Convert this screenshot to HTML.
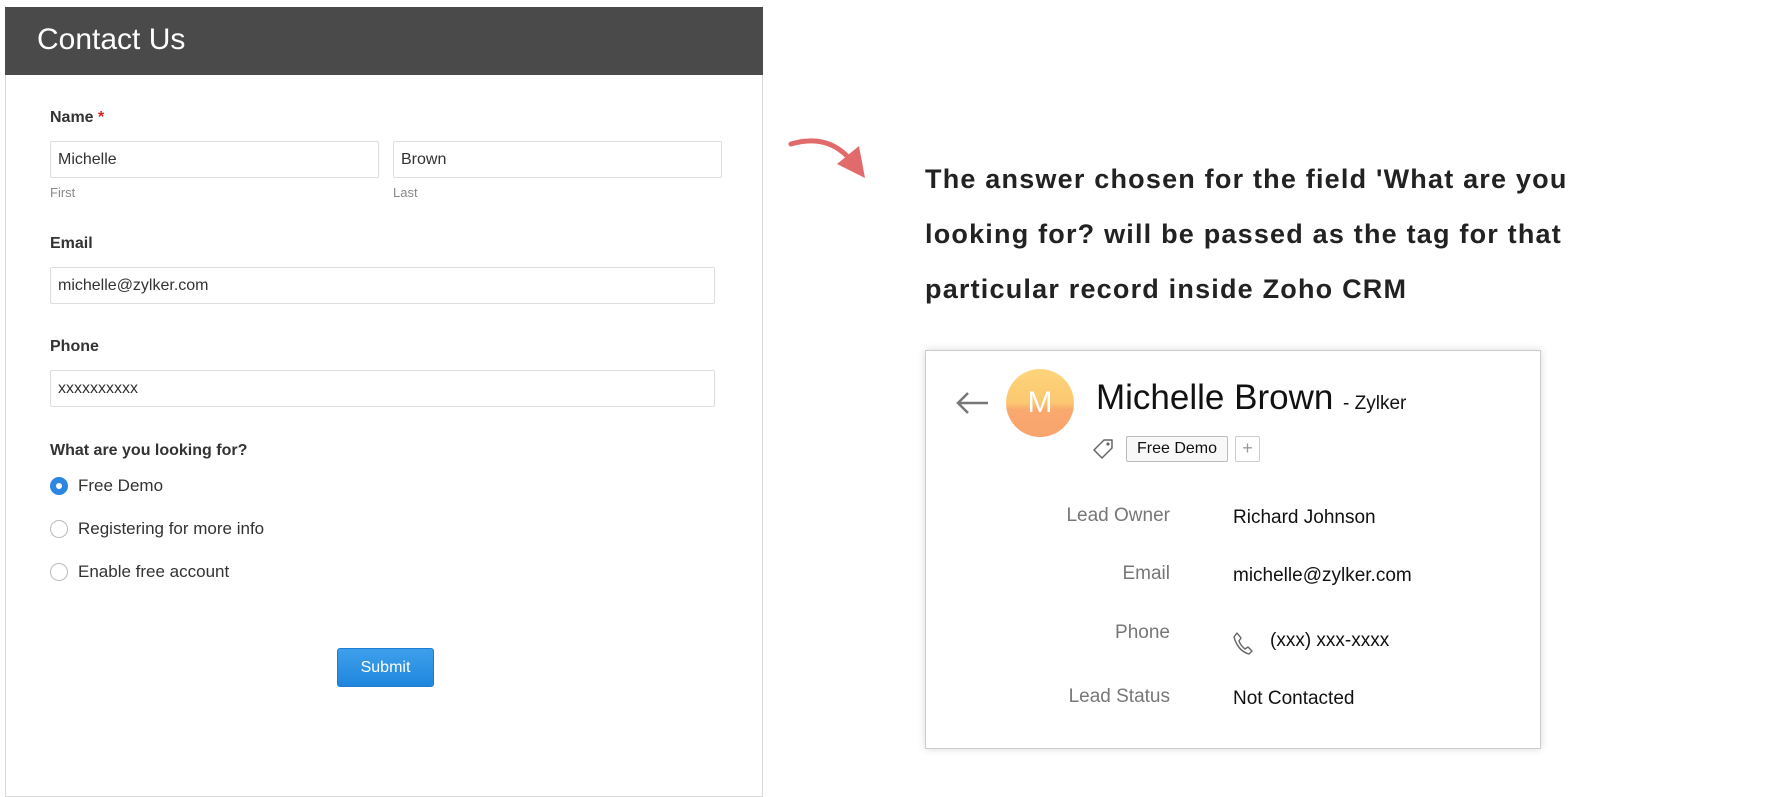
<!DOCTYPE html>
<html><head><meta charset="utf-8"><style>
*{box-sizing:border-box;margin:0;padding:0}
body{width:1770px;height:796px;background:#fff;position:relative;overflow:hidden;font-family:"Liberation Sans",sans-serif}
.a{position:absolute}
.card{left:5px;top:7px;width:758px;height:790px;border:1px solid #d8d8d8;background:#fff}
.hdr{left:5px;top:7px;width:758px;height:68px;background:#4a4a4a}
.hdr span{position:absolute;left:32px;top:16px;color:#fff;font-size:30px}
.lbl{font-size:16px;font-weight:bold;color:#333}
.inp{border:1px solid #ddd;border-radius:2px;height:37px;font-size:16px;color:#333;padding:9px 7px}
.sub{font-size:13px;color:#888}
.radio{width:18px;height:18px;border:1px solid #bbb;border-radius:50%}
.rt{font-size:17px;color:#333}
.big{font-size:27px;font-weight:bold;color:#222;left:925px;letter-spacing:1.2px}
.crm{left:925px;top:350px;width:616px;height:399px;border:1px solid #ccc;box-shadow:0 0 8px rgba(0,0,0,.15);background:#fff}
.fl{font-size:19px;color:#777;text-align:right;width:300px;left:870px}
.fv{font-size:19px;color:#111;left:1233px}
</style></head><body>
<div class="a card"></div>
<div class="a hdr"><span>Contact Us</span></div>
<div class="a lbl" style="left:50px;top:109px">Name <span style="color:#e02020">*</span></div>
<div class="a inp" style="left:50px;top:141px;width:329px">Michelle</div>
<div class="a inp" style="left:393px;top:141px;width:329px">Brown</div>
<div class="a sub" style="left:50px;top:185px">First</div>
<div class="a sub" style="left:393px;top:185px">Last</div>
<div class="a lbl" style="left:50px;top:235px">Email</div>
<div class="a inp" style="left:50px;top:267px;width:665px">michelle@zylker.com</div>
<div class="a lbl" style="left:50px;top:338px">Phone</div>
<div class="a inp" style="left:50px;top:370px;width:665px">xxxxxxxxxx</div>
<div class="a lbl" style="left:50px;top:442px">What are you looking for?</div>
<div class="a radio" style="left:50px;top:477px;border-color:#2b87e3;background:#2b87e3"><div style="width:6px;height:6px;background:#fff;border-radius:50%;margin:5px"></div></div>
<div class="a rt" style="left:78px;top:476px">Free Demo</div>
<div class="a radio" style="left:50px;top:520px"></div>
<div class="a rt" style="left:78px;top:519px">Registering for more info</div>
<div class="a radio" style="left:50px;top:563px"></div>
<div class="a rt" style="left:78px;top:562px">Enable free account</div>
<div class="a" style="left:337px;top:648px;width:97px;height:39px;background:linear-gradient(#3ea0ec,#1f86dc);border:1px solid #1c7ccf;border-radius:3px;color:#fff;font-size:16px;text-align:center;line-height:37px">Submit</div>

<svg class="a" style="left:785px;top:134px" width="90" height="50" viewBox="0 0 90 50">
<path d="M6 10 Q40 0 62 22" stroke="#e16b6b" stroke-width="5" fill="none" stroke-linecap="round"/>
<path d="M52 30 L80 44 L74 12 Z" fill="#e16b6b"/>
</svg>

<div class="a big" style="top:164px">The answer chosen for the field 'What are you</div>
<div class="a big" style="top:219px">looking for? will be passed as the tag for that</div>
<div class="a big" style="top:274px">particular record inside Zoho CRM</div>

<div class="a crm"></div>
<svg class="a" style="left:954px;top:390px" width="38" height="26" viewBox="0 0 38 26"><path d="M34 13 H4 M14 3 L4 13 L14 23" stroke="#777" stroke-width="2.5" fill="none"/></svg>
<div class="a" style="left:1006px;top:369px;width:68px;height:68px;border-radius:50%;background:linear-gradient(#fdd57a 0%,#fcc770 50%,#f9a86e 60%,#f8a56d 100%);color:#fff;font-size:30px;text-align:center;line-height:68px">M</div>
<div class="a" style="left:1096px;top:378px;font-size:35px;color:#111">Michelle Brown <span style="font-size:19px">- Zylker</span></div>
<svg class="a" style="left:1092px;top:438px" width="22" height="22" viewBox="0 0 22 22"><path d="M12 2 L20 2 L20 10 L10 20 L2 12 Z" stroke="#666" stroke-width="1.5" fill="none" stroke-linejoin="round"/><circle cx="16" cy="6" r="1.6" fill="#666"/></svg>
<div class="a" style="left:1126px;top:436px;width:102px;height:26px;border:1px solid #bbb;border-radius:2px;background:#f8f8f8;font-size:16px;text-align:center;line-height:24px;color:#111">Free Demo</div>
<div class="a" style="left:1235px;top:436px;width:25px;height:26px;border:1px solid #ccc;border-radius:2px;color:#999;font-size:18px;text-align:center;line-height:23px">+</div>
<div class="a fl" style="top:505px">Lead Owner</div>
<div class="a fv" style="top:507px">Richard Johnson</div>
<div class="a fl" style="top:563px">Email</div>
<div class="a fv" style="top:565px">michelle@zylker.com</div>
<div class="a fl" style="top:622px">Phone</div>
<svg class="a" style="left:1232px;top:631px" width="22" height="24" viewBox="0 0 22 24"><path d="M5 2 L9 7 L7 10 Q9 15 13 18 L16 16 L20 20 L17 23 Q6 20 2 6 Z" stroke="#666" stroke-width="1.4" fill="none" stroke-linejoin="round"/></svg>
<div class="a fv" style="top:630px;left:1270px">(xxx) xxx-xxxx</div>
<div class="a fl" style="top:686px">Lead Status</div>
<div class="a fv" style="top:688px">Not Contacted</div>
</body></html>
